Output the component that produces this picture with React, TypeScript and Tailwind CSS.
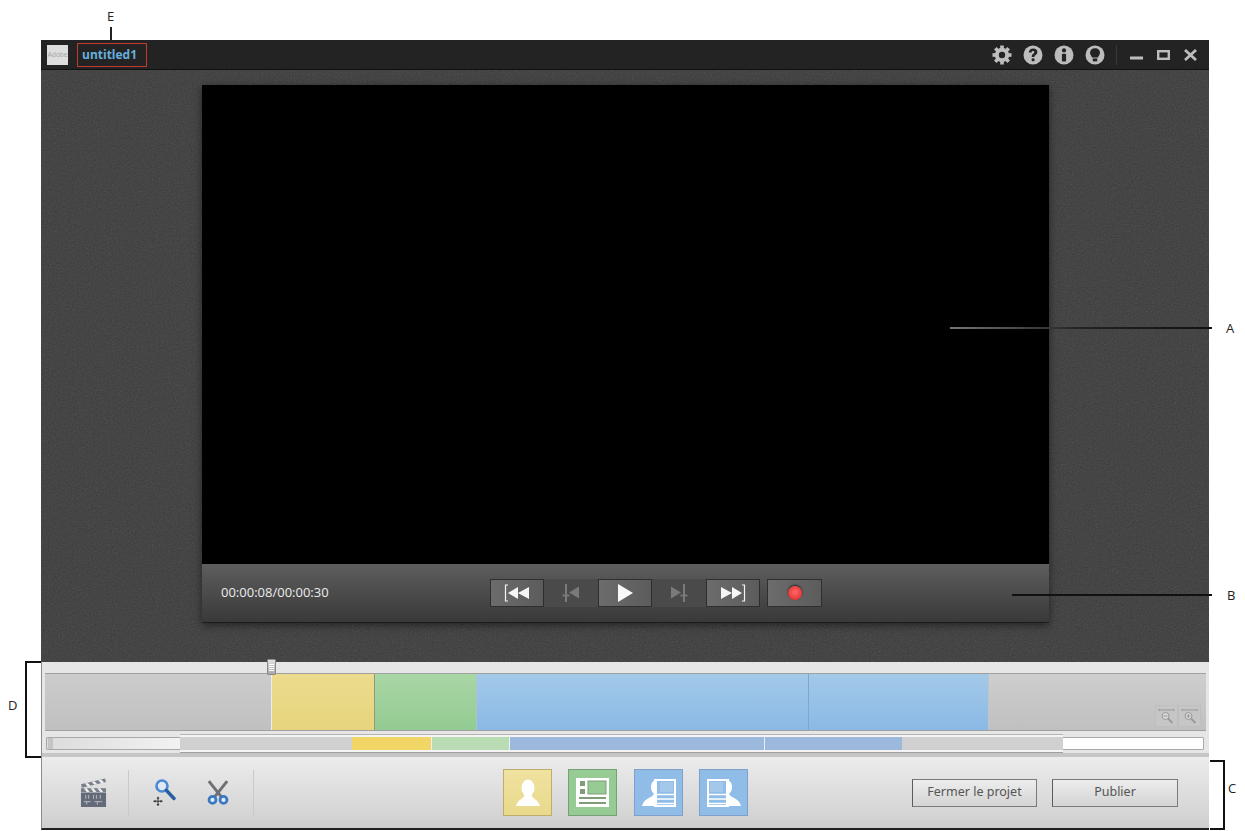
import React from "react";

const ICON = "#bdbdbd";

function Gear() {
  const teeth = [0, 45, 90, 135, 180, 225, 270, 315];
  return (
    <svg width="20" height="20" viewBox="0 0 20 20" className="block">
      <circle cx="10" cy="10" r="7.200" fill={ICON} />
      {teeth.map((a) => (
        <rect key={a} x="8.200" y="0.500" width="3.600" height="5" fill={ICON} transform={`rotate(${a} 10 10)`} />
      ))}
      <circle cx="10" cy="10" r="3.200" fill="#232323" />
    </svg>
  );
}

function Help() {
  return (
    <svg width="20" height="20" viewBox="0 0 20 20" className="block">
      <circle cx="10" cy="10" r="9.500" fill={ICON} />
      <path d="M5.800 7.600C6 5 7.800 3.600 10.200 3.600c2.600 0 4.200 1.400 4.200 3.400 0 1.700-1.100 2.500-2 3.200-.7.500-1 .9-1 1.800H8.700c0-1.700.5-2.500 1.500-3.200.7-.6 1.100-1 1.100-1.600 0-.7-.5-1.200-1.300-1.200-.9 0-1.300.6-1.400 1.600z" fill="#232323" />
      <rect x="8.700" y="13.400" width="2.800" height="2.800" fill="#232323" />
    </svg>
  );
}

function Info() {
  return (
    <svg width="20" height="20" viewBox="0 0 20 20" className="block">
      <circle cx="10" cy="10" r="9.500" fill={ICON} />
      <circle cx="10" cy="5.400" r="2.100" fill="#232323" />
      <rect x="7.900" y="8.800" width="4.200" height="7.600" rx="1" fill="#232323" />
    </svg>
  );
}

function Bulb() {
  return (
    <svg width="20" height="20" viewBox="0 0 20 20" className="block">
      <circle cx="10" cy="10" r="9.500" fill={ICON} />
      <path d="M10 3.200c-3 0-5 2-5 4.500 0 2 1.500 3 2 4.700h6c.5-1.700 2-2.700 2-4.700 0-2.500-2-4.500-5-4.500z" fill="#232323" />
      <rect x="7.800" y="13.400" width="4.400" height="3" fill="#232323" />
    </svg>
  );
}

function WindowButtons() {
  return (
    <div className="flex items-center">
      <svg width="13" height="12" viewBox="0 0 13 12" className="block mr-[14px]">
        <rect x="0" y="7.500" width="13" height="3" fill={ICON} />
      </svg>
      <svg width="13" height="12" viewBox="0 0 13 12" className="block mr-[14px]">
        <rect x="1.200" y="2.200" width="10.600" height="7.600" fill="none" stroke={ICON} strokeWidth="2.400" />
      </svg>
      <svg width="13" height="12" viewBox="0 0 13 12" className="block">
        <path d="M1 1l11 10M12 1L1 11" stroke={ICON} strokeWidth="2.800" />
      </svg>
    </div>
  );
}

function TitleBar() {
  return (
    <div className="h-[30px] shrink-0 flex items-center bg-[#232323] border-b border-[#111111] pl-[6px] pr-[12px]">
      <div className="w-[21px] h-[20px] bg-[#dedede] flex items-center justify-center text-[7px] leading-none text-[#a4aca4] font-['Liberation_Sans',sans-serif]">
        Adobe
      </div>
      <div className="ml-[9px] w-[70px] h-[24px] border border-[#c23a30] flex items-center pl-[4px] text-[12px] font-bold text-[#66afdf] font-['Open_Sans',sans-serif]">
        untitled1
      </div>
      <div className="flex-1" />
      <div className="flex items-center gap-[11px]">
        <Gear />
        <Help />
        <Info />
        <Bulb />
      </div>
      <div className="w-px h-[20px] bg-[#383838] ml-[11px] mr-[13px]" />
      <WindowButtons />
    </div>
  );
}

function Tbtn({ children, on }: { children: React.ReactNode; on?: boolean }) {
  return (
    <div
      className={
        on
          ? "w-[54px] h-[28px] flex items-center justify-center bg-gradient-to-r from-[#6c6c6c] to-[#5c5c5c] border border-[#2e2e2e]"
          : "w-[54px] h-[28px] flex items-center justify-center bg-[#4a4a4a]"
      }
    >
      {children}
    </div>
  );
}

function Transport() {
  return (
    <div className="flex items-center">
      <Tbtn on>
        <svg width="26" height="18" viewBox="0 0 26 18" className="block">
          <path d="M4 1H1.500v16H4" fill="none" stroke="#f4f4f4" strokeWidth="1.200" />
          <path d="M14 3v12L4 9zM25 3v12l-11-6z" fill="#f6f6f6" />
        </svg>
      </Tbtn>
      <Tbtn>
        <svg width="20" height="18" viewBox="0 0 20 18" className="block">
          <rect x="4" y="0" width="2" height="18" fill="#7a7a7a" />
          <path d="M1.500 11.500h7" stroke="#7a7a7a" strokeWidth="1.800" />
          <path d="M18 2.500v12L8 8.500z" fill="#7a7a7a" />
        </svg>
      </Tbtn>
      <Tbtn on>
        <svg width="18" height="18" viewBox="0 0 18 18" className="block">
          <path d="M2 0l15 9-15 9z" fill="#f8f8f8" />
        </svg>
      </Tbtn>
      <Tbtn>
        <svg width="20" height="18" viewBox="0 0 20 18" className="block">
          <rect x="14" y="0" width="2" height="18" fill="#7a7a7a" />
          <path d="M11.500 11.500h7" stroke="#7a7a7a" strokeWidth="1.800" />
          <path d="M2 2.500v12l10-6z" fill="#7a7a7a" />
        </svg>
      </Tbtn>
      <Tbtn on>
        <svg width="26" height="18" viewBox="0 0 26 18" className="block">
          <path d="M22 1h2.500v16H22" fill="none" stroke="#f4f4f4" strokeWidth="1.200" />
          <path d="M12 3v12l10-6zM1 3v12l11-6z" fill="#f6f6f6" />
        </svg>
      </Tbtn>
      <div className="ml-[7px] w-[55px] h-[28px] flex items-center justify-center bg-gradient-to-r from-[#6c6c6c] to-[#5c5c5c] border border-[#2e2e2e]">
        <div className="w-[14px] h-[14px] rounded-full bg-[radial-gradient(circle_at_50%_45%,#ff6a6a,#dc2020)] shadow-[0_-1px_2px_#222222]" />
      </div>
    </div>
  );
}

function Player() {
  return (
    <div className="relative ml-[161px] w-[847px] h-[538px] flex flex-col bg-black shadow-[0_2px_8px_rgba(0,0,0,0.5)]">
      <div className="flex-1 bg-black" />
      <div className="h-[59px] shrink-0 flex items-center bg-gradient-to-b from-[#5e5e5e] to-[#393939] border-b border-[#1c1c1c] pl-[19px]">
        <div className="w-[269px] text-[13px] font-medium text-[#ececec] font-['Open_Sans',sans-serif]">
          00:00:08/00:00:30
        </div>
        <Transport />
      </div>
    </div>
  );
}

function Stage() {
  return (
    <div className="relative h-[592px] shrink-0 pt-[15px] bg-[#3b3b3b] overflow-hidden">
      <svg className="absolute inset-0 w-full h-full opacity-[0.16]">
        <filter id="grain">
          <feTurbulence type="fractalNoise" baseFrequency="0.7" numOctaves="2" />
          <feColorMatrix type="saturate" values="0" />
        </filter>
        <rect width="100%" height="100%" filter="url(#grain)" />
      </svg>
      <Player />
    </div>
  );
}

function Segment({ w, cls }: { w: string; cls: string }) {
  return <div className={`${w} ${cls}`} />;
}

function ZoomGlyph({ plus }: { plus?: boolean }) {
  return (
    <div className="w-[23px] h-[22px] bg-[#c6c6c6] border border-[#bebebe] flex items-center justify-center">
      <svg width="17" height="16" viewBox="0 0 17 16" className="block">
        <path d="M1 2h15M1 .8v2.400M16 .8v2.400" stroke="#999999" strokeWidth="1" fill="none" />
        <circle cx="7.500" cy="8" r="3.500" fill="#d8d8d8" stroke="#999999" />
        <path d="M10 10.500l4.500 4.500" stroke="#999999" strokeWidth="1.800" />
        <path d={plus ? "M5.500 8h4M7.500 6v4" : "M5.500 8h4"} stroke="#999999" strokeWidth="1" />
      </svg>
    </div>
  );
}

function Timeline() {
  return (
    <div className="relative h-[95px] shrink-0 flex flex-col bg-[#e6e6e6] border-l border-[#8c8c8c] pl-[3px] pr-[3px]">
      <div className="h-[11px] shrink-0" />
      <div className="relative h-[58px] shrink-0 flex border-y border-[#a0a0a0]">
        <Segment w="w-[226px]" cls="bg-gradient-to-b from-[#cccccc] to-[#c0c0c0]" />
        <div className="w-[1px] bg-[#ececec]" />
        <Segment w="w-[103px]" cls="bg-gradient-to-b from-[#ecdb8e] to-[#e6d57c] border-r border-[#8f9a78]" />
        <Segment w="w-[102px]" cls="bg-gradient-to-b from-[#a9d6a5] to-[#93cb92] border-r border-[#a8c8c8]" />
        <Segment w="w-[332px]" cls="bg-gradient-to-b from-[#a3c9e8] to-[#8ab9e5] border-r border-[#7fa6cf]" />
        <Segment w="w-[180px]" cls="bg-gradient-to-b from-[#a3c9e8] to-[#8ab9e5] border-r border-[#bcc6d0]" />
        <div className="flex-1 bg-gradient-to-b from-[#cecece] to-[#c0c0c0] flex items-end justify-end pr-[5px] pb-[3px]">
          <ZoomGlyph />
          <ZoomGlyph plus />
        </div>
      </div>
      <div className="relative mt-[6px] ml-[1px] mr-[2px] h-[13px] shrink-0 flex bg-white border border-[#a8a8a8] rounded-[1px]">
        <div className="w-[133px] bg-gradient-to-r from-[#dcdcdc] to-[#f2f2f2] flex">
          <div className="w-[5px] bg-[#c4c4c4] ml-[1px]" />
        </div>
        <div className="relative flex w-[883px] h-[17px] -mt-[3px] shrink-0 border-y-2 border-[#f4f4f4] bg-[#d0d0d0] shadow-[0_-1px_0_#b4b4b4,0_1px_0_#a0a0a0]">
          <div className="w-[172px] bg-[#d0d0d0]" />
          <div className="w-[79px] bg-[#f1d666]" />
          <div className="w-px bg-[#f0f0f0]" />
          <div className="w-[77px] bg-[#b9dcb4]" />
          <div className="w-px bg-[#f0f0f0]" />
          <div className="w-[254px] bg-[#9cb8dc]" />
          <div className="w-px bg-[#e8eef6]" />
          <div className="w-[137px] bg-[#9cb8dc]" />
        </div>
        <div className="flex-1 bg-white" />
      </div>
      <div className="flex-1 mt-[3px] -ml-[3px] -mr-[3px] border-t border-[#c4c4c4] bg-[#c6c6c6]" />
      <div className="absolute left-[225px] top-[-3px] w-[9px] h-[16px] bg-gradient-to-b from-[#e2e2e2] to-[#a8a8a8] border border-[#8a8a8a] rounded-[1px] flex flex-col justify-center gap-[1px] px-[1px]">
        <div className="h-px bg-white" />
        <div className="h-px bg-white" />
        <div className="h-px bg-white" />
        <div className="h-px bg-white" />
      </div>
    </div>
  );
}

function Clapper() {
  return (
    <svg width="27" height="30" viewBox="0 0 28 30" className="block">
      <path d="M1 6L26 0l1 3.500-25 6z" fill="#7a808a" />
      <path d="M5 5.200l3 3 3-.7-3-3zM12 3.500l3 3 3-.7-3-3zM19 1.800l3 3 3-.7-3-3z" fill="#f0f0f0" />
      <rect x="1" y="10" width="26" height="4" fill="#7a808a" />
      <path d="M4 10l3 4h3l-3-4zM11 10l3 4h3l-3-4zM18 10l3 4h3l-3-4z" fill="#f0f0f0" />
      <rect x="1" y="14.500" width="26" height="15" fill="#646b78" />
      <path d="M6 17v4M9 17v4M14 17v4M17 17v4M21 17v4M4 24h7M15 24h8M7 24v3M18 24v3" stroke="#b8bcc4" strokeWidth="1" />
    </svg>
  );
}

function Magnifier() {
  return (
    <svg width="24" height="27" viewBox="0 0 24 27" className="block">
      <circle cx="10" cy="7" r="5.500" fill="#dfe9f5" stroke="#4a8ad4" strokeWidth="2.600" />
      <path d="M14.500 11.500l7.500 8" stroke="#2a5f9f" strokeWidth="3.400" strokeLinecap="round" />
      <path d="M6 18v8.500M1.500 22.200h9" stroke="#333333" strokeWidth="1" />
      <path d="M4.500 19.500L6 17.500l1.500 2zM4.500 25L6 27l1.500-2zM3.500 20.700L1.500 22.200l2 1.500zM8.500 20.700l2 1.500-2 1.500z" fill="#333333" />
    </svg>
  );
}

function Scissors() {
  return (
    <svg width="22" height="26" viewBox="0 0 24 26" className="block">
      <path d="M2 0l13.500 17M22 0L8.500 17" stroke="#6d6f74" strokeWidth="3.200" />
      <circle cx="6" cy="20.500" r="3.800" fill="#e2ebf5" stroke="#3a78c4" strokeWidth="3" />
      <circle cx="18" cy="20.500" r="3.800" fill="#e2ebf5" stroke="#3a78c4" strokeWidth="3" />
    </svg>
  );
}

function LayoutTile({ cls, children }: { cls: string; children: React.ReactNode }) {
  return <div className={`w-[49px] h-[47px] shrink-0 flex items-center justify-center border ${cls}`}>{children}</div>;
}

function ActionButton({ children, w }: { children: React.ReactNode; w: string }) {
  return (
    <div className={`${w} h-[28px] flex items-center justify-center border border-[#7a7a7a] border-l-[#5c5c5c] bg-gradient-to-b from-[#ededed] to-[#d4d4d4] text-[12.5px] text-[#555555] font-['Noto_Sans','Open_Sans',sans-serif]`}>
      {children}
    </div>
  );
}

function Toolbar() {
  return (
    <div className="flex-1 flex items-center bg-gradient-to-b from-[#ececec] to-[#cfcfcf] border-l border-l-[#8c8c8c] border-b-2 border-b-[#222222]">
      <div className="w-[86px] flex pl-[38px]">
        <Clapper />
      </div>
      <div className="w-px h-[46px] bg-[#cacaca]" />
      <div className="w-[124px] flex items-center pl-[23px] gap-[31px]">
        <Magnifier />
        <Scissors />
      </div>
      <div className="w-px h-[46px] bg-[#cacaca]" />
      <div className="ml-[249px] flex items-center">
        <LayoutTile cls="bg-gradient-to-b from-[#f0e2a0] to-[#e8d98a] border-[#bdae70]">
          <svg width="24" height="27" viewBox="0 0 24 27" className="block">
            <ellipse cx="12" cy="9" rx="6.500" ry="8.500" fill="#ffffff" />
            <path d="M8.500 15C8.500 20 1.500 20 0 27h24c-1.500-7-8.500-7-8.500-12z" fill="#ffffff" />
          </svg>
        </LayoutTile>
        <div className="ml-[16px]">
          <LayoutTile cls="bg-[#96cb94] border-[#78a078]">
            <svg width="33" height="29" viewBox="0 0 33 29" className="block">
              <rect x="0" y="0" width="33" height="29" fill="#ffffff" />
              <rect x="4" y="3" width="5" height="5" fill="#809d7a" />
              <rect x="4" y="11" width="5" height="5" fill="#809d7a" />
              <rect x="12" y="3" width="18" height="13" fill="#96cb94" stroke="#809d7a" strokeWidth="1" />
              <rect x="3" y="19" width="27" height="2" fill="#809d7a" />
              <rect x="3" y="24" width="27" height="2" fill="#809d7a" />
            </svg>
          </LayoutTile>
        </div>
        <div className="ml-[17px]">
          <LayoutTile cls="bg-[#8fbde8] border-[#7fa0c8]">
            <svg width="34" height="28" viewBox="0 0 34 28" className="block">
              <rect x="13" y="1" width="20" height="26" fill="#8fbde8" stroke="#ffffff" strokeWidth="2" />
              <rect x="18" y="3" width="13" height="10" fill="#a4c8ea" />
              <path d="M15 15.500h17M15 20h17M15 24.500h17" stroke="#ffffff" strokeWidth="1.600" />
              <path d="M15 1C11 1 9 4 9 8c0 3 1 5 3 7 -2 4-10 4-12 12h15z" fill="#ffffff" />
            </svg>
          </LayoutTile>
        </div>
        <div className="ml-[16px]">
          <LayoutTile cls="bg-[#8fbde8] border-[#7fa0c8]">
            <svg width="34" height="28" viewBox="0 0 34 28" className="block">
              <rect x="1" y="1" width="20" height="26" fill="#8fbde8" stroke="#ffffff" strokeWidth="2" />
              <rect x="3" y="3" width="13" height="10" fill="#a4c8ea" />
              <path d="M2 15.500h17M2 20h17M2 24.500h17" stroke="#ffffff" strokeWidth="1.600" />
              <path d="M19 1c4 0 6 3 6 7 0 3-1 5-3 7 2 4 10 4 12 12H19z" fill="#ffffff" />
            </svg>
          </LayoutTile>
        </div>
      </div>
      <div className="flex-1" />
      <div className="flex items-center gap-[15px] pr-[31px]">
        <ActionButton w="w-[125px]">Fermer le projet</ActionButton>
        <ActionButton w="w-[126px]">Publier</ActionButton>
      </div>
    </div>
  );
}

function Callouts() {
  const label = "absolute text-[13px] text-[#222222] font-['Open_Sans',sans-serif] leading-none";
  return (
    <>
      <div className={`${label} left-[107px] top-[10px]`}>E</div>
      <div className="absolute left-[110px] top-[27px] w-[2px] h-[13px] bg-[#222222]" />
      <div className="absolute left-[950px] top-[327px] w-[262px] h-[2px] bg-gradient-to-r from-[#777777] via-[#222222] to-[#111111]" />
      <div className={`${label} left-[1226px] top-[322px]`}>A</div>
      <div className="absolute left-[1012px] top-[594px] w-[200px] h-[2px] bg-[#111111]" />
      <div className={`${label} left-[1227px] top-[589px]`}>B</div>
      <div className="absolute left-[1210px] top-[760px] w-[15px] h-[70px] border-y-2 border-r-2 border-[#111111]" />
      <div className={`${label} left-[1228px] top-[782px]`}>C</div>
      <div className="absolute left-[25px] top-[661px] w-[16px] h-[97px] border-y-2 border-l-2 border-[#111111]" />
      <div className={`${label} left-[8px] top-[699px]`}>D</div>
    </>
  );
}

export default function App() {
  return (
    <div className="relative w-[1245px] h-[831px] bg-white pt-[40px] pl-[41px] overflow-hidden font-['Open_Sans','Liberation_Sans',sans-serif]">
      <div className="w-[1168px] h-[790px] flex flex-col">
        <TitleBar />
        <Stage />
        <Timeline />
        <Toolbar />
      </div>
      <Callouts />
    </div>
  );
}
